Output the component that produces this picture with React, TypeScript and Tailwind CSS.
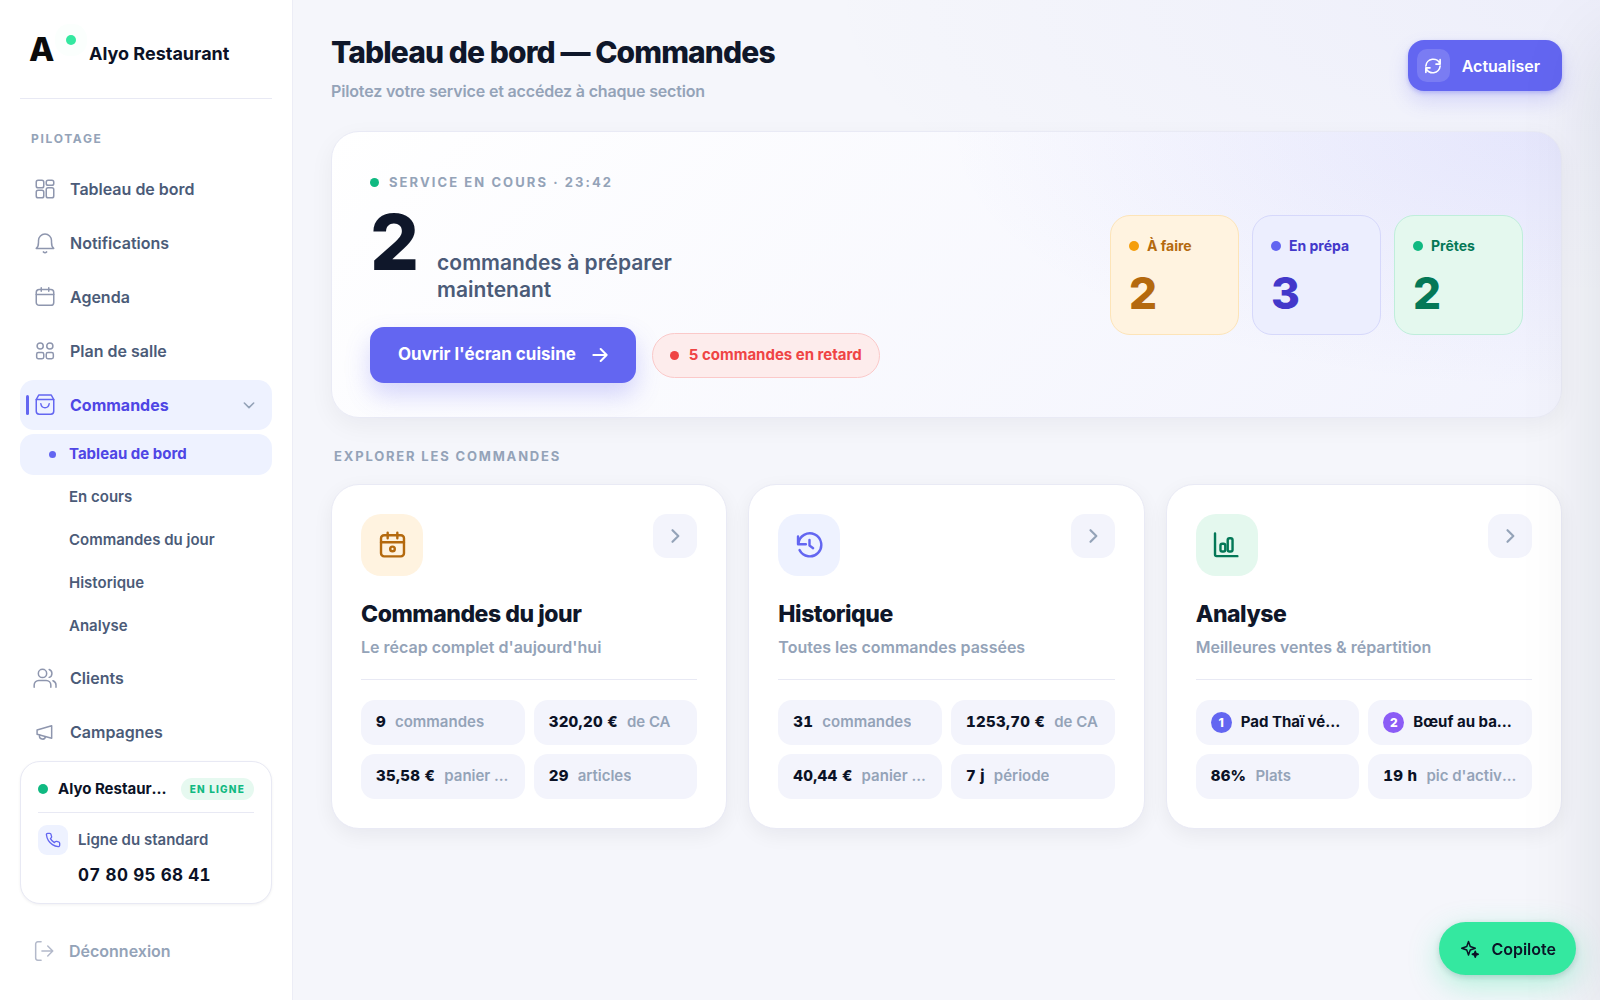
import type { ReactNode } from "react";

type IconProps = { children: ReactNode; className?: string; strokeWidth?: number };

function Icon({ children, className = "size-5", strokeWidth = 1.8 }: IconProps) {
  return (
    <svg
      viewBox="0 0 24 24"
      fill="none"
      stroke="currentColor"
      strokeWidth={strokeWidth}
      strokeLinecap="round"
      strokeLinejoin="round"
      aria-hidden="true"
      className={`shrink-0 ${className}`}
    >
      {children}
    </svg>
  );
}

const NAV_TOP = [
  {
    label: "Tableau de bord",
    icon: (
      <>
        <rect x="1.5" y="1.5" width="9" height="9" rx="2.2" />
        <rect x="13.5" y="1.5" width="9" height="6" rx="2.2" />
        <rect x="1.5" y="13.5" width="9" height="9" rx="2.2" />
        <rect x="13.5" y="10.5" width="9" height="12" rx="2.2" />
      </>
    ),
  },
  {
    label: "Notifications",
    icon: (
      <>
        <path d="M1.5 18.5c2.2-1.6 2.7-4.1 2.7-7.4V9a7.8 7.8 0 0 1 15.6 0v2.1c0 3.3.5 5.8 2.7 7.4z" />
        <path d="M10 22.7c1.2 1.1 2.8 1.1 4 0" />
      </>
    ),
  },
  {
    label: "Agenda",
    icon: (
      <>
        <rect x="1.5" y="3" width="21" height="19" rx="3.5" />
        <path d="M1.5 9h21M7.5 1v4M16.5 1v4" />
      </>
    ),
  },
  {
    label: "Plan de salle",
    icon: (
      <>
        <circle cx="6.2" cy="6" r="3.7" />
        <circle cx="17.8" cy="6" r="3.7" />
        <rect x="2" y="13.8" width="8.5" height="7.5" rx="2" />
        <rect x="13.5" y="13.8" width="8.5" height="7.5" rx="2" />
      </>
    ),
  },
];

const SUB_NAV = ["En cours", "Commandes du jour", "Historique", "Analyse"];

const NAV_BOTTOM = [
  {
    label: "Clients",
    icon: (
      <>
        <circle cx="9" cy="6.5" r="5" />
        <path d="M-1 23v-2.5A5.500 5.500 0 0 1 4.500 15h9a5.500 5.500 0 0 1 5.500 5.500V23" />
        <path d="M17 1.800a5 5 0 0 1 0 9.400M21.500 15.200a5.500 5.500 0 0 1 3.700 5.300V23" />
      </>
    ),
  },
  {
    label: "Campagnes",
    icon: (
      <>
        <path d="M2.500 9.500 20 4.500v15L2.500 14.800z" />
        <path d="M5.500 15.700c-.5 2.300.8 4.200 2.900 4.700 2.100.5 3.700-.8 4.200-2.700" />
      </>
    ),
  },
];

const STATUSES = [
  { label: "À faire", value: "2", tile: "border-[#fde4b8] bg-[#fff3e0] text-[#b4690e]", dot: "bg-[#f59e0b]" },
  { label: "En prépa", value: "3", tile: "border-[#d6d8fb] bg-[#eceefe] text-[#4338ca]", dot: "bg-[#6366f1]" },
  { label: "Prêtes", value: "2", tile: "border-[#bfeedb] bg-[#e4f8ee] text-[#047857]", dot: "bg-[#10b981]" },
];

type Chip = { value: string; label?: string; rank?: string; rankColor?: string };

const SECTIONS: { title: string; subtitle: string; tone: string; icon: ReactNode; chips: Chip[] }[] = [
  {
    title: "Commandes du jour",
    subtitle: "Le récap complet d'aujourd'hui",
    tone: "bg-[#fff3e0] text-[#b4690e]",
    icon: (
      <>
        <rect x="2.5" y="3.5" width="19" height="17.5" rx="2.5" />
        <path d="M2.5 9.300h19M8 1.500v4.500M16 1.500v4.500" />
        <circle cx="12" cy="14.800" r="1.900" />
      </>
    ),
    chips: [
      { value: "9", label: "commandes" },
      { value: "320,20 €", label: "de CA" },
      { value: "35,58 €", label: "panier moyen" },
      { value: "29", label: "articles" },
    ],
  },
  {
    title: "Historique",
    subtitle: "Toutes les commandes passées",
    tone: "bg-[#eef2ff] text-[#6366f1]",
    icon: (
      <>
        <path d="M2.500 4.500V11h6.500" />
        <path d="M2.800 10.500A9.500 9.500 0 1 1 3.800 15.800" />
        <path d="M12 7.500V12l3 2.200" />
      </>
    ),
    chips: [
      { value: "31", label: "commandes" },
      { value: "1253,70 €", label: "de CA" },
      { value: "40,44 €", label: "panier moyen" },
      { value: "7 j", label: "période" },
    ],
  },
  {
    title: "Analyse",
    subtitle: "Meilleures ventes & répartition",
    tone: "bg-[#e4f8ee] text-[#047857]",
    icon: (
      <>
        <path d="M2.500 2v17.500c0 .8.5 1.300 1.300 1.300H21" />
        <rect x="7" y="10.500" width="4" height="6.500" rx="1.500" />
        <rect x="13" y="6" width="4" height="11" rx="1.500" />
      </>
    ),
    chips: [
      { value: "Pad Thaï végétarien", rank: "1", rankColor: "bg-[#6366f1]" },
      { value: "Bœuf au basilic", rank: "2", rankColor: "bg-[#8b5cf6]" },
      { value: "86%", label: "Plats" },
      { value: "19 h", label: "pic d'activité" },
    ],
  },
];

function NavLink({ label, icon }: { label: string; icon: ReactNode }) {
  return (
    <a href="#" className="flex h-[50px] shrink-0 items-center gap-[15px] rounded-[14px] px-[15px] text-[#4b5b78]">
      <Icon className="size-5 overflow-visible text-[#8e96ae]">{icon}</Icon>
      {label}
    </a>
  );
}

function Sidebar() {
  return (
    <aside className="sticky top-0 flex h-screen w-[293px] shrink-0 flex-col border-r border-[#ecedf6] bg-white px-5">
      <div className="flex h-[99px] shrink-0 items-center border-b border-[#e8e9f4] pl-[9px]">
        <span className="flex w-[60px] items-start">
          <span className="text-[33px] leading-9 font-extrabold text-[#0b0b0b]">A</span>
          <span className="mt-1 ml-3 size-[10px] rounded-full bg-[#34e8a0] shadow-[0_0_0_11px_rgba(52,232,160,0.02)]" />
        </span>
        <span className="pt-2 text-[18px] font-bold text-[#0b1226]">Alyo Restaurant</span>
      </div>

      <nav className="flex min-h-0 flex-1 flex-col overflow-hidden text-base font-semibold">
        <div className="mt-[30px] mb-[15px] pl-[11px] text-[12px] leading-5 font-bold tracking-[0.14em] text-[#94a3b8]">
          PILOTAGE
        </div>
        <div className="flex flex-col gap-1">
          {NAV_TOP.map((item) => (
            <NavLink key={item.label} {...item} />
          ))}
          <a
            href="#"
            className="relative flex h-[50px] items-center gap-[15px] rounded-[14px] bg-[#eef2ff] px-[15px] font-bold text-[#4f46e5]"
          >
            <span className="absolute left-[6px] h-5 w-[3px] rounded-full bg-[#6366f1]" />
            <Icon className="size-5 overflow-visible text-[#6366f1]">
              <path d="M1.500 5.500v14A3.500 3.500 0 0 0 5 23h14a3.500 3.500 0 0 0 3.500-3.500v-14L19.500 0h-15z" />
              <path d="M1.500 5.500h21M7 10.500c.5 3 2.300 4.800 5 4.800s4.500-1.800 5-4.800" />
            </Icon>
            <span className="flex-1">Commandes</span>
            <Icon className="size-4 text-[#94a3b8]" strokeWidth={2.4}>
              <path d="m5 9 7 7 7-7" />
            </Icon>
          </a>
        </div>
        <div className="mt-1 mb-[6px] flex flex-col gap-[2px] text-[15px]">
          <a
            href="#"
            className="flex h-[41px] items-center rounded-[14px] bg-[#eef2ff] pl-[29px] font-bold text-[#4f46e5]"
          >
            <span className="mr-[13px] size-[7px] rounded-full bg-[#6366f1]" />
            Tableau de bord
          </a>
          {SUB_NAV.map((label) => (
            <a key={label} href="#" className="flex h-[41px] items-center pl-[49px] text-[#4b5b78]">
              {label}
            </a>
          ))}
        </div>
        <div className="flex flex-col gap-1">
          {NAV_BOTTOM.map((item) => (
            <NavLink key={item.label} {...item} />
          ))}
        </div>
      </nav>

      <div className="shrink-0 rounded-[20px] border border-[#e8e9f4] bg-white px-[17px] pt-4 pb-4 shadow-[0_1px_3px_rgba(15,23,42,0.06)]">
        <div className="flex items-center border-b border-[#e8e9f4] pb-3">
          <span className="mr-[10px] size-[10px] shrink-0 rounded-full bg-[#10b981]" />
          <span className="mr-2 min-w-0 flex-1 truncate text-[15px] font-bold text-[#0b1226]">Alyo Restaurant</span>
          <span className="rounded-full bg-[#e6f9f0] px-[9px] py-[3px] text-[10px] leading-4 font-extrabold tracking-[0.12em] whitespace-nowrap text-[#10b981]">
            EN LIGNE
          </span>
        </div>
        <div className="mt-3 flex items-center gap-[10px] text-[15px] font-semibold text-[#4b5b78]">
          <span className="grid size-[30px] place-items-center rounded-[9px] bg-[#eef2ff] text-[#6366f1]">
            <Icon className="size-4" strokeWidth={2}>
              <path d="M22 16.920v3a2 2 0 0 1-2.180 2 19.790 19.790 0 0 1-8.630-3.070 19.500 19.500 0 0 1-6-6 19.790 19.790 0 0 1-3.070-8.670A2 2 0 0 1 4.110 2h3a2 2 0 0 1 2 1.720c.127.960.361 1.903.700 2.810a2 2 0 0 1-.450 2.110L8.090 9.910a16 16 0 0 0 6 6l1.270-1.270a2 2 0 0 1 2.110-.450c.907.339 1.850.573 2.810.700A2 2 0 0 1 22 16.920z" />
            </Icon>
          </span>
          Ligne du standard
        </div>
        <div className="mt-2 pl-10 text-[17px] leading-6 font-bold tracking-[0.02em] text-[#0b1226] tabular-nums">
          07 80 95 68 41
        </div>
      </div>

      <button
        type="button"
        className="mt-[22px] mb-6 flex h-[50px] shrink-0 items-center gap-[15px] pl-[14px] text-base font-semibold text-[#94a3b8]"
      >
        <Icon className="size-5 text-[#b3b9ca]">
          <path d="M8.500 1H4.500A2.500 2.500 0 0 0 2 3.500v17A2.500 2.500 0 0 0 4.500 23h4M9.500 12h13M16.500 6l6 6-6 6" />
        </Icon>
        Déconnexion
      </button>
    </aside>
  );
}

function Hero() {
  return (
    <section className="flex items-center justify-between gap-8 rounded-[28px] border border-[#e9eaf5] bg-[radial-gradient(ellipse_50%_90%_at_100%_0%,rgba(99,102,241,0.11),transparent),linear-gradient(135deg,#ffffff,#f2f3fd)] px-[38px] py-8 shadow-[0_8px_24px_rgba(15,23,42,0.05)]">
      <div>
        <div className="flex items-center gap-[10px] pt-2 text-[13px] leading-5 font-bold tracking-[0.16em] text-[#94a3b8]">
          <span className="size-[9px] rounded-full bg-[#10b981]" />
          SERVICE EN COURS · 23:42
        </div>
        <div className="mt-[10px] flex items-baseline gap-[18px]">
          <span className="text-[77px] leading-[80px] font-extrabold text-[#0f172a]">2</span>
          <span className="w-[260px] text-[21px] leading-[27px] font-semibold text-[#4b5b78]">
            commandes à préparer maintenant
          </span>
        </div>
        <div className="mt-6 mb-[2px] flex items-center gap-4">
          <button
            type="button"
            className="flex h-14 items-center gap-4 rounded-[14px] bg-[#6366f1] px-7 text-[17px] font-bold text-white shadow-[0_12px_24px_rgba(99,102,241,0.26)]"
          >
            Ouvrir l'écran cuisine
            <Icon className="size-4" strokeWidth={3}>
              <path d="M2 12h20M13 3l9 9-9 9" />
            </Icon>
          </button>
          <span className="flex h-[45px] items-center gap-[10px] rounded-full border border-[#fbc9c9] bg-[#fdecec] px-[17px] text-[15px] font-bold text-[#ef4444]">
            <span className="size-[9px] rounded-full bg-[#ef4444]" />5 commandes en retard
          </span>
        </div>
      </div>

      <div className="flex gap-[13px]">
        {STATUSES.map((status) => (
          <div key={status.label} className={`h-[120px] w-[129px] rounded-[20px] border px-[18px] pt-5 ${status.tile}`}>
            <div className="flex items-center gap-2 text-[14px] leading-5 font-bold">
              <span className={`size-[10px] rounded-full ${status.dot}`} />
              {status.label}
            </div>
            <div className="mt-[15px] text-[44px] leading-[44px] font-extrabold">{status.value}</div>
          </div>
        ))}
      </div>
    </section>
  );
}

function ChipItem({ value, label, rank, rankColor }: Chip) {
  return (
    <li className="flex h-[45px] min-w-0 items-center gap-[9px] rounded-[14px] bg-[#f3f4fc] px-[15px] text-[15px]">
      {rank && (
        <span
          className={`grid size-[21px] shrink-0 place-items-center rounded-full text-[12px] font-extrabold text-white ${rankColor}`}
        >
          {rank}
        </span>
      )}
      {rank ? (
        <span className="min-w-0 truncate font-bold text-[#0b1226]">{value}</span>
      ) : (
        <span className="shrink-0 font-extrabold tracking-[0.02em] text-[#0b1226] tabular-nums">{value}</span>
      )}
      {label && <span className="min-w-0 truncate font-semibold text-[#94a3b8]">{label}</span>}
    </li>
  );
}

export default function App() {
  return (
    <div className="flex min-h-screen bg-[#f5f6fb] font-[Inter,sans-serif]">
      <Sidebar />

      <main className="min-w-0 flex-1 bg-[radial-gradient(ellipse_60%_30%_at_100%_0%,rgba(99,102,241,0.05),transparent)] px-[38px] pt-8 pb-10">
        <header className="flex items-start justify-between">
          <div>
            <h1 className="text-[30px] leading-10 font-extrabold tracking-[-0.03em] text-[#0f172a]">
              Tableau de bord — Commandes
            </h1>
            <p className="mt-[7px] text-base font-semibold tracking-[-0.01em] text-[#94a3b8]">
              Pilotez votre service et accédez à chaque section
            </p>
          </div>
          <button
            type="button"
            className="mt-2 flex h-[51px] items-center gap-3 rounded-[16px] bg-[#6366f1] pr-[22px] pl-[9px] text-base font-semibold text-white shadow-[0_2px_4px_rgba(99,102,241,0.35),0_10px_20px_rgba(99,102,241,0.20)]"
          >
            <span className="grid size-[33px] place-items-center rounded-[10px] bg-white/15">
              <Icon className="size-[18px]" strokeWidth={2.2}>
                <path d="M21.500 9.500A9.800 9.800 0 0 0 2.500 12M21.500 3.500v6H16" />
                <path d="M2.500 14.500A9.800 9.800 0 0 0 21.500 12M2.500 20.500v-6H8" />
              </Icon>
            </span>
            Actualiser
          </button>
        </header>

        <div className="mt-7">
          <Hero />
        </div>

        <h2 className="mt-7 mb-[18px] pl-[3px] text-[13px] leading-5 font-bold tracking-[0.14em] text-[#94a3b8]">
          EXPLORER LES COMMANDES
        </h2>

        <div className="grid grid-cols-3 gap-[21px]">
          {SECTIONS.map((section) => (
            <article
              key={section.title}
              className="min-w-0 rounded-[28px] border border-[#e9eaf5] bg-white p-[29px] shadow-[0_6px_20px_rgba(15,23,42,0.06)]"
            >
              <div className="flex items-start justify-between">
                <span className={`grid size-[62px] place-items-center rounded-[20px] ${section.tone}`}>
                  <Icon className="size-[29px]" strokeWidth={2}>
                    {section.icon}
                  </Icon>
                </span>
                <a
                  href="#"
                  aria-label={section.title}
                  className="grid size-11 place-items-center rounded-[14px] bg-[#f3f4fc] text-[#94a3b8]"
                >
                  <Icon className="size-5" strokeWidth={2.6}>
                    <path d="m9 5 7 7-7 7" />
                  </Icon>
                </a>
              </div>
              <h3 className="mt-[22px] text-[23px] leading-8 font-extrabold tracking-[-0.02em] text-[#0f172a]">
                {section.title}
              </h3>
              <p className="mt-[5px] border-b border-[#e8e9f4] pb-5 text-base font-semibold text-[#94a3b8]">
                {section.subtitle}
              </p>
              <ul className="mt-5 grid grid-cols-2 gap-[9px]">
                {section.chips.map((chip) => (
                  <ChipItem key={chip.value} {...chip} />
                ))}
              </ul>
            </article>
          ))}
        </div>
      </main>

      {/* closed drawer, only its shadow reaches into the page */}
      <div className="pointer-events-none fixed inset-y-0 left-full w-80 shadow-[0_40px_80px_rgba(15,23,42,0.11)]" />

      <button
        type="button"
        className="fixed right-6 bottom-[25px] flex h-[53px] items-center gap-3 rounded-full bg-[#34e8a0] pr-5 pl-[22px] text-base font-semibold text-[#0b1226] shadow-[0_2px_6px_rgba(15,23,42,0.15),0_10px_30px_rgba(52,232,160,0.35)]"
      >
        <Icon className="size-[18px]" strokeWidth={2}>
          <path d="M10 2 12.300 8.700 19 11l-6.700 2.300L10 20 7.700 13.300 1 11l6.700-2.300z" />
          <path d="m19 15 1.100 2.900L23 19l-2.900 1.100L19 23l-1.100-2.900L15 19l2.900-1.100z" fill="currentColor" />
        </Icon>
        Copilote
      </button>
    </div>
  );
}
